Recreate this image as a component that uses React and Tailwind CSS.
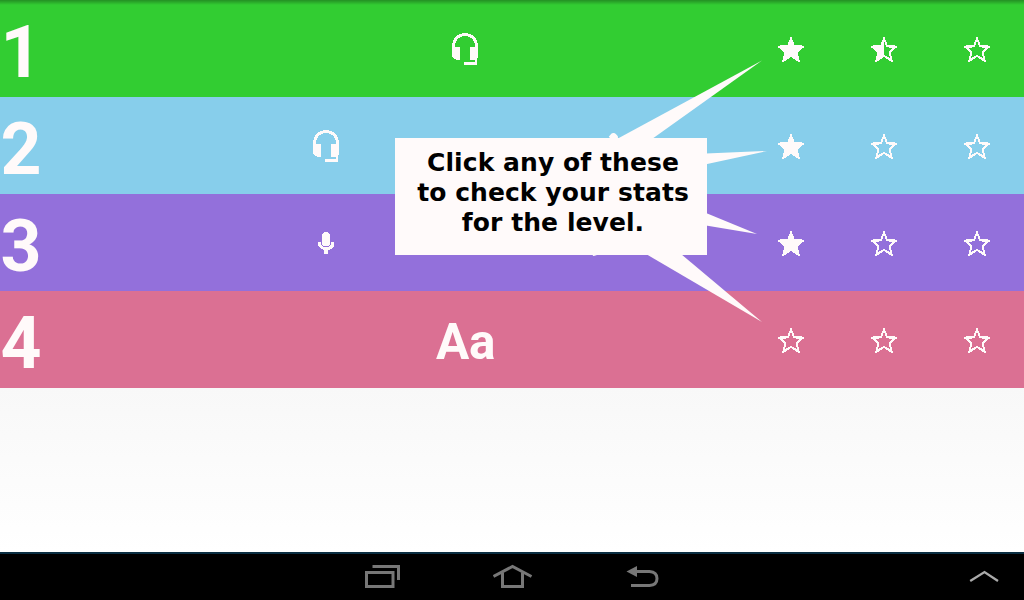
import React from "react";

const STAR = "M13 -0.3 L16.7 9.2 L26.2 9.6 L26.2 11 L19.6 16.6 L21.9 26 L20.800 26 L13 21 L5.200 26 L4.1 26 L6.4 16.6 L-0.2 11 L-0.2 9.6 L9.3 9.2 Z";
const STAR_HOLE = "M13 5 L15.3 11.2 L21.8 11.9 L17.5 15.9 L18.9 22.1 L13 18.8 L7.1 22.1 L8.5 15.9 L4.2 11.9 L10.7 11.2 Z";
const STAR_HALF_HOLE = "M13 5 L15.3 11.2 L21.8 11.9 L17.5 15.9 L18.9 22.1 L13 18.8 Z";

function Star({ kind }) {
  const hole = kind === "empty" ? STAR_HOLE : kind === "half" ? STAR_HALF_HOLE : "";
  return (
    <svg className="h-[26px] w-[26px] overflow-visible" viewBox="0 0 26 26" shapeRendering="crispEdges">
      <path fill="#fffafa" fillRule="evenodd" d={`${STAR} ${hole}`} />
    </svg>
  );
}

function Headset() {
  return (
    <svg className="mt-px h-8 w-[26px]" viewBox="0 0 26 32" fill="#fffafa" shapeRendering="crispEdges">
      <path d="M13 0 C5.5 0 0 5.5 0 12.5 V24 L1 25 L3 26 L5 27 H8 V14 H3 V12 C3 7 7.5 3 13 3 C18.500 3 23 7 23 12 V14 H18 V26 H23 V29 H12 V32 H25 V25 L26 24 V12.500 C26 5.500 20.500 0 13 0 Z" />
      <path d="M18 26 h5 v1 h-5 z" />
    </svg>
  );
}

function Mic() {
  return (
    <svg className="mt-px h-[22px] w-4" viewBox="0 0 16 22" fill="#fffafa" shapeRendering="crispEdges">
      <rect x="4" y="0" width="8" height="14" rx="3.500" />
      <path d="M0 10 H3 V12 L5 15 H11 L13 12 V10 H16 V14 L13 17 L10 18 V22 H6 V18 L3 17 L0 14 Z" />
    </svg>
  );
}

function Pencil() {
  return (
    <svg className="h-[26px] w-[26px]" viewBox="0 0 24 24" fill="#fffafa">
      <path d="M0.800 19 V24 L2.500 23.800 L6 22.500 L19 10 L14 5 Z M15.500 3.500 L17.800 0.800 Q18.500 0 19.500 0 H20.200 Q21 0 22 1 L23.500 2.500 Q24.500 4 23.500 5.500 L20.500 8.500 Z" />
    </svg>
  );
}

function Letters() {
  return <span className="relative top-[3px] left-[0.5px] text-[49.5px] leading-none font-bold tracking-[-0.3px]">Aa</span>;
}

const LEVELS = [
  { n: 1, bg: "bg-[#32cd32]", skills: [Headset], stars: ["full", "half", "empty"] },
  { n: 2, bg: "bg-[#87ceeb]", skills: [Headset, Pencil], stars: ["full", "empty", "empty"] },
  { n: 3, bg: "bg-[#9370db]", skills: [Mic, Pencil], stars: ["full", "empty", "empty"] },
  { n: 4, bg: "bg-[#db7093]", skills: [Letters], stars: ["empty", "empty", "empty"] },
];

function LevelRow({ level }) {
  return (
    <div className={`flex h-[97px] items-center text-[#fffafa] ${level.bg}`}>
      <div className="w-[186px] pt-[8px] pl-[0.6px] text-[71.5px] leading-[72px] font-bold">{level.n}</div>
      <div className="flex w-[558px]">
        {level.skills.map((Skill, i) => (
          <div key={i} className="flex h-[97px] flex-1 items-center justify-center">
            <Skill />
          </div>
        ))}
      </div>
      <div className="flex w-[280px]">
        {level.stars.map((kind, i) => (
          <div key={i} className="flex w-[93px] justify-center pt-px pl-px">
            <Star kind={kind} />
          </div>
        ))}
      </div>
    </div>
  );
}

function Callout() {
  return (
    <>
      <svg className="absolute top-0 left-0 h-[400px] w-[1024px]" viewBox="0 0 1024 400" fill="#fffafa">
        <polygon points="617,139 652,139 762,60.5" />
        <polygon points="706,153.500 706,164.300 767,151" />
        <polygon points="706,213 706,225.500 757,234" />
        <polygon points="646,254 681,254 762,322" />
      </svg>
      <div className="absolute top-[138px] left-[395px] h-[117px] w-[312px] bg-[#fffafa] pt-[10px] pl-[4px] text-center font-['DejaVu_Sans',sans-serif] text-[25px] leading-[30px] font-bold tracking-[0.07px] whitespace-nowrap text-black">
        Click any of these
        <br />
        to check your stats
        <br />
        for the level.
      </div>
    </>
  );
}

function NavBar() {
  return (
    <div className="flex h-12 border-t-2 border-[#0a2e42] bg-black">
      <div className="flex w-[700px] items-start pt-[10px] pl-[365px]">
        <svg className="h-6 w-9" viewBox="0 0 36 24" fill="none" stroke="#777" strokeWidth="3">
          <rect x="1.500" y="8.500" width="26.500" height="14" />
          <path d="M7.500 2.500 H33.500 V16" />
        </svg>
        <svg className="ml-[92px] h-6 w-10" viewBox="0 0 40 24" fill="none" stroke="#777" strokeWidth="3">
          <path d="M0.500 12.500 L19.500 2.500 L38.500 12.500" />
          <path d="M9.500 8.500 V22.500 H29.500 V8.500" />
        </svg>
        <svg className="ml-[93px] h-6 w-[34px]" viewBox="0 0 34 24" fill="none" stroke="#777" strokeWidth="3">
          <path d="M9 7.500 H23.500 Q31 8 31 14.500 Q31 21 23.500 21.500 H5" />
          <path d="M0.500 7.500 L11 2 V13 Z" fill="#777" stroke="none" />
        </svg>
      </div>
      <div className="flex flex-1 justify-end pt-[16px] pr-[25px]">
        <svg className="h-3 w-[30px]" viewBox="0 0 30 12" fill="none" stroke="#aaa" strokeWidth="2.300">
          <path d="M1.200 11 L15.500 2 L29 11" />
        </svg>
      </div>
    </div>
  );
}

export default function App() {
  return (
    <div className="relative flex h-[600px] w-[1024px] flex-col overflow-hidden font-['Roboto',sans-serif]">
      <div className="absolute top-0 left-0 h-[5px] w-full bg-linear-to-b from-black/30 to-transparent" />
      {LEVELS.map((level) => (
        <LevelRow key={level.n} level={level} />
      ))}
      <div className="flex-1 bg-linear-to-b from-[#f8f8f8] to-white" />
      <NavBar />
      <Callout />
    </div>
  );
}
